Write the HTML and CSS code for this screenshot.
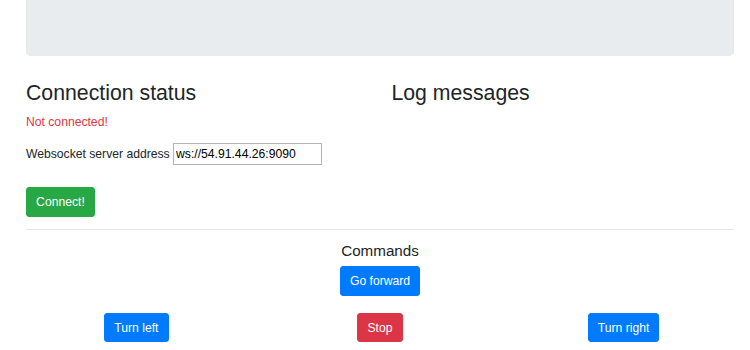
FILE: index.html
```html
<!DOCTYPE html>
<html lang="en">
<head>
    <meta charset="UTF-8">
    <meta name="viewport" content="width=device-width, initial-scale=1.0">
    <title>Robot control</title>
    <link rel="stylesheet" href="styles.css">
</head>
<body>
    <div class="container">
        <!-- top banner, scrolled out of view -->
        <div class="jumbotron"></div>

        <div class="row">
            <div class="col-half">
                <h3>Connection status</h3>
                <p class="status">Not connected!</p>
                <div class="address">
                    <label for="ws">Websocket server address</label>
                    <input id="ws" type="text" value="ws://54.91.44.26:9090">
                </div>
                <button class="btn btn-success">Connect!</button>
            </div>
            <div class="col-half">
                <h3>Log messages</h3>
                <div class="log"></div>
            </div>
        </div>

        <hr>

        <div class="commands">
            <h5>Commands</h5>
            <button class="btn btn-primary">Go forward</button>
        </div>
        <div class="row turn-row">
            <div class="col-third"><button class="btn btn-primary">Turn left</button></div>
            <div class="col-third"><button class="btn btn-danger">Stop</button></div>
            <div class="col-third"><button class="btn btn-primary">Turn right</button></div>
        </div>
    </div>
</body>
</html>
```
FILE: styles.css
```css
/* page base, bootstrap-like at a smaller scale */
html,body{
    margin: 0;
    padding: 0;
    background-color: #fff;
}
body{
    font-family: "Liberation Sans", Arial, sans-serif;
    font-size: 12.16px;
    line-height: 1.5;
    color: #212529;
}
.container{
    padding: 0 16px 0 26px;
}
.jumbotron{
    height: 56px;
    background-color: #e9ecef;
    border-radius: 0 0 4.6px 4.6px;
    margin-bottom: 25.3px;
}
.row{
    display: flex;
    margin: 0 -11.4px;
}
.col-half{
    flex: 0 0 50%;
    box-sizing: border-box;
    padding: 0 11.4px;
}
.col-third{
    flex: 0 0 33.3333%;
    box-sizing: border-box;
    padding: 0 11.4px;
    text-align: center;
}
h3,h5{
    margin: 0 0 6.08px;
    font-weight: 500;
    line-height: 1.2;
}
h3{
    font-size: 21.28px;
}
h5{
    font-size: 15.2px;
}
.status{
    margin: 0 0 12.16px;
    color: #dc3545;
}
.address{
    display: flex;
    align-items: center;
    height: 22px;
    margin-bottom: 22px;
}
.address label{
    margin-right: 3.4px;
}
.address input{
    box-sizing: border-box;
    width: 149px;
    height: 22px;
    padding: 1px 2px;
    border: 1px solid #b4b4b4;
    font-family: "Liberation Sans", Arial, sans-serif;
    font-size: 12.16px;
    color: #000;
}
.btn{
    display: inline-block;
    padding: 4.56px 9.12px;
    font-family: inherit;
    font-size: 12.16px;
    line-height: 1.5;
    color: #fff;
    border: 1px solid transparent;
    border-radius: 3px;
    cursor: pointer;
}
.btn-success{
    background-color: #28a745;
    border-color: #28a745;
}
.btn-primary{
    background-color: #007bff;
    border-color: #007bff;
}
.btn-danger{
    background-color: #dc3545;
    border-color: #dc3545;
}
hr{
    margin: 12.16px 0;
    border: 0;
    border-top: 1px solid rgba(0,0,0,.1);
}
.commands{
    text-align: center;
}
.turn-row{
    margin-top: 17.5px;
}
```
